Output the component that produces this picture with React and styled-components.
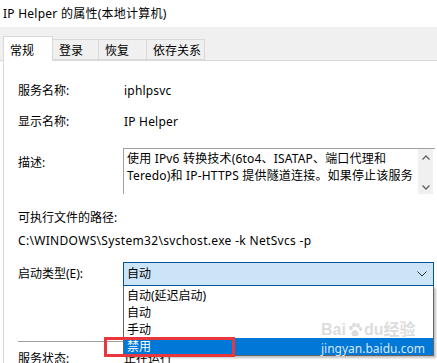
import React from 'react';
import styled, { createGlobalStyle } from 'styled-components';

const GlobalStyle = createGlobalStyle`
  html, body {
    margin: 0;
    padding: 0;
    background: #ffffff;
    overflow: hidden;
  }
  body {
    font-family: "Noto Sans", "Noto Sans CJK SC", sans-serif;
    font-size: 12px;
    color: #000000;
  }
`;

const tabs = ['常规', '登录', '恢复', '依存关系'];
const tabWidths = [50, 47, 49, 59];
const startupOptions = ['自动(延迟启动)', '自动', '手动', '禁用'];

const Window = styled.div`
  width: 437px;
  height: 363px;
  position: relative;
  overflow: hidden;
`;

const TitleBar = styled.div`
  height: 27px;
  padding-left: 3px;
  display: flex;
  align-items: center;
  padding-bottom: 2px;
  box-sizing: border-box;
  font-size: 12px;
  letter-spacing: 0.25px;
  background: #ffffff;
`;

const TabStrip = styled.div`
  height: 34px;
  box-sizing: border-box;
  background: #f0f0f0;
  border-bottom: 1px solid #d9d9d9;
  padding-left: 3px;
  display: flex;
  align-items: flex-end;
`;

const Tab = styled.div`
  width: ${(p) => p.$w}px;
  height: ${(p) => (p.$active ? 25 : 21)}px;
  margin-bottom: ${(p) => (p.$active ? -1 : 0)}px;
  box-sizing: border-box;
  border: 1px solid #d9d9d9;
  border-bottom: ${(p) => (p.$active ? 'none' : '1px solid #d9d9d9')};
  margin-left: ${(p) => (p.$first ? 0 : -1)}px;
  background: ${(p) => (p.$active ? '#ffffff' : '#f0f0f0')};
  position: relative;
  z-index: ${(p) => (p.$active ? 1 : 0)};
  padding-left: 6px;
  padding-top: ${(p) => (p.$active ? 2 : 1)}px;
  display: flex;
  align-items: center;
  font-size: 12px;
`;

const Panel = styled.div`
  border-left: 1px solid #d9d9d9;
  margin-left: 3px;
  padding: 20px 0 0 14px;
  display: flex;
  flex-direction: column;
`;

const Row = styled.div`
  display: flex;
  align-items: ${(p) => (p.$start ? 'flex-start' : 'center')};
  margin-top: ${(p) => p.$top || 0}px;
  min-height: 20px;
  line-height: 20px;
  position: relative;
`;

const Label = styled.div`
  width: 105px;
  flex: none;
  margin-top: ${(p) => p.$offset || 0}px;
`;

const Value = styled.div`
  padding-left: ${(p) => (p.$flush ? 0 : 1)}px;
  letter-spacing: ${(p) => p.$ls || 0}px;
  white-space: nowrap;
`;

const DescBox = styled.div`
  width: 312px;
  height: 46px;
  box-sizing: border-box;
  border-top: 1px solid #a0a0a0;
  border-left: 1px solid #a0a0a0;
  display: flex;
`;

const DescText = styled.div`
  flex: 1;
  padding: 1px 0 0 3px;
  line-height: 17px;
  letter-spacing: 0.18px;
  white-space: nowrap;
  overflow: hidden;
`;

const ScrollBar = styled.div`
  width: 15px;
  margin-right: 2px;
  background: #f0f0f0;
  display: flex;
  flex-direction: column;
  justify-content: space-between;
  align-items: center;
  padding: 6px 0 4px;
  box-sizing: border-box;
`;

const Select = styled.div`
  width: 311px;
  height: 24px;
  box-sizing: border-box;
  background: #cce4f7;
  border: 1px solid #005499;
  display: flex;
  align-items: center;
  justify-content: space-between;
  padding: 0 6px 0 3px;
  position: relative;
`;

const DropList = styled.div`
  position: absolute;
  left: 105px;
  top: 24px;
  width: 311px;
  box-sizing: border-box;
  background: #ffffff;
  border: 1px solid #646464;
  border-top: none;
  box-shadow: 2px 2px 2px rgba(0, 0, 0, 0.25);
  padding-top: 1px;
  z-index: 5;
`;

const Option = styled.div`
  height: 17px;
  line-height: 18px;
  padding-left: 3px;
  background: ${(p) => (p.$selected ? '#0078d7' : 'transparent')};
  color: ${(p) => (p.$selected ? '#ffffff' : '#000000')};
`;

const Watermark = styled.div`
  position: absolute;
  left: 197px;
  top: 35px;
  display: flex;
  flex-direction: column;
  align-items: flex-start;
  pointer-events: none;
`;

const MarkLogo = styled.div`
  display: flex;
  align-items: center;
  font-family: "Liberation Sans", "Noto Sans CJK SC", sans-serif;
  font-size: 16px;
  font-weight: bold;
  color: rgba(190, 190, 190, 0.55);
  line-height: 18px;
  height: 18px;
`;

const MarkUrl = styled.div`
  margin-top: 1px;
  font-family: "Noto Sans", sans-serif;
  font-size: 12px;
  color: rgba(255, 255, 255, 0.85);
  line-height: 17px;
`;

const Annotation = styled.div`
  position: absolute;
  left: -20px;
  top: 51px;
  width: 131px;
  height: 20px;
  box-sizing: border-box;
  border: 3px solid #e8383d;
  z-index: 6;
`;

const Separator = styled.div`
  height: 1px;
  background: #a0a0a0;
  margin-top: 55px;
  margin-right: 16px;
`;

const Chevron = () => (
  <svg width="10" height="6" viewBox="0 0 10 6">
    <path d="M0.5 0.5 L5 5 L9.5 0.5" fill="none" stroke="#333" strokeWidth="1" />
  </svg>
);

const ArrowUp = () => (
  <svg width="8" height="5" viewBox="0 0 8 5">
    <path d="M0.5 4.5 L4 1 L7.5 4.5" fill="none" stroke="#606060" strokeWidth="1.3" />
  </svg>
);

const ArrowDown = () => (
  <svg width="8" height="5" viewBox="0 0 8 5">
    <path d="M0.5 0.5 L4 4 L7.5 0.5" fill="none" stroke="#606060" strokeWidth="1.3" />
  </svg>
);

const Paw = () => (
  <svg width="16" height="16" viewBox="0 0 16 16" style={{ margin: '0 1px' }}>
    <g fill="rgba(190,190,190,0.55)">
      <ellipse cx="4" cy="6" rx="1.8" ry="2.3" />
      <ellipse cx="7" cy="3" rx="1.8" ry="2.3" />
      <ellipse cx="11" cy="3.5" rx="1.8" ry="2.3" />
      <ellipse cx="13.5" cy="7" rx="1.6" ry="2.1" />
      <path d="M8 8 C5 8 3.5 12 5 13.5 C6.5 15 9.5 14 11 13.5 C12.5 12.5 11 8 8 8 Z" />
    </g>
  </svg>
);

export default function App() {
  return (
    <Window>
      <GlobalStyle />
      <TitleBar>IP Helper 的属性(本地计算机)</TitleBar>
      <TabStrip>
        {tabs.map((t, i) => (
          <Tab key={t} $w={tabWidths[i]} $active={i === 0} $first={i === 0}>
            {t}
          </Tab>
        ))}
      </TabStrip>
      <Panel>
        <Row>
          <Label>服务名称:</Label>
          <Value $ls={0.2}>iphlpsvc</Value>
        </Row>
        <Row $top={11}>
          <Label>显示名称:</Label>
          <Value $ls={0.2}>IP Helper</Value>
        </Row>
        <Row $top={16} $start>
          <Label $offset={5}>描述:</Label>
          <DescBox>
            <DescText>
              使用 IPv6 转换技术(6to4、ISATAP、端口代理和
              <br />
              Teredo)和 IP-HTTPS 提供隧道连接。如果停止该服务
            </DescText>
            <ScrollBar>
              <ArrowUp />
              <ArrowDown />
            </ScrollBar>
          </DescBox>
        </Row>
        <Row $top={14}>
          <Label>可执行文件的路径:</Label>
        </Row>
        <Row $top={3}>
          <Value $flush $ls={0.32}>C:\WINDOWS\System32\svchost.exe -k NetSvcs -p</Value>
        </Row>
        <Row $top={11}>
          <Label>启动类型(E):</Label>
          <Select>
            <span>自动</span>
            <Chevron />
          </Select>
          <DropList>
            {startupOptions.map((o, i) => (
              <Option key={o} $selected={i === 3}>
                {o}
              </Option>
            ))}
            <Watermark>
              <MarkLogo>
                Bai
                <Paw />
                du经验
              </MarkLogo>
              <MarkUrl>jingyan.baidu.com</MarkUrl>
            </Watermark>
            <Annotation />
          </DropList>
        </Row>
        <Separator />
        <Row $top={7}>
          <Label>服务状态:</Label>
          <Value>正在运行</Value>
        </Row>
      </Panel>
    </Window>
  );
}
